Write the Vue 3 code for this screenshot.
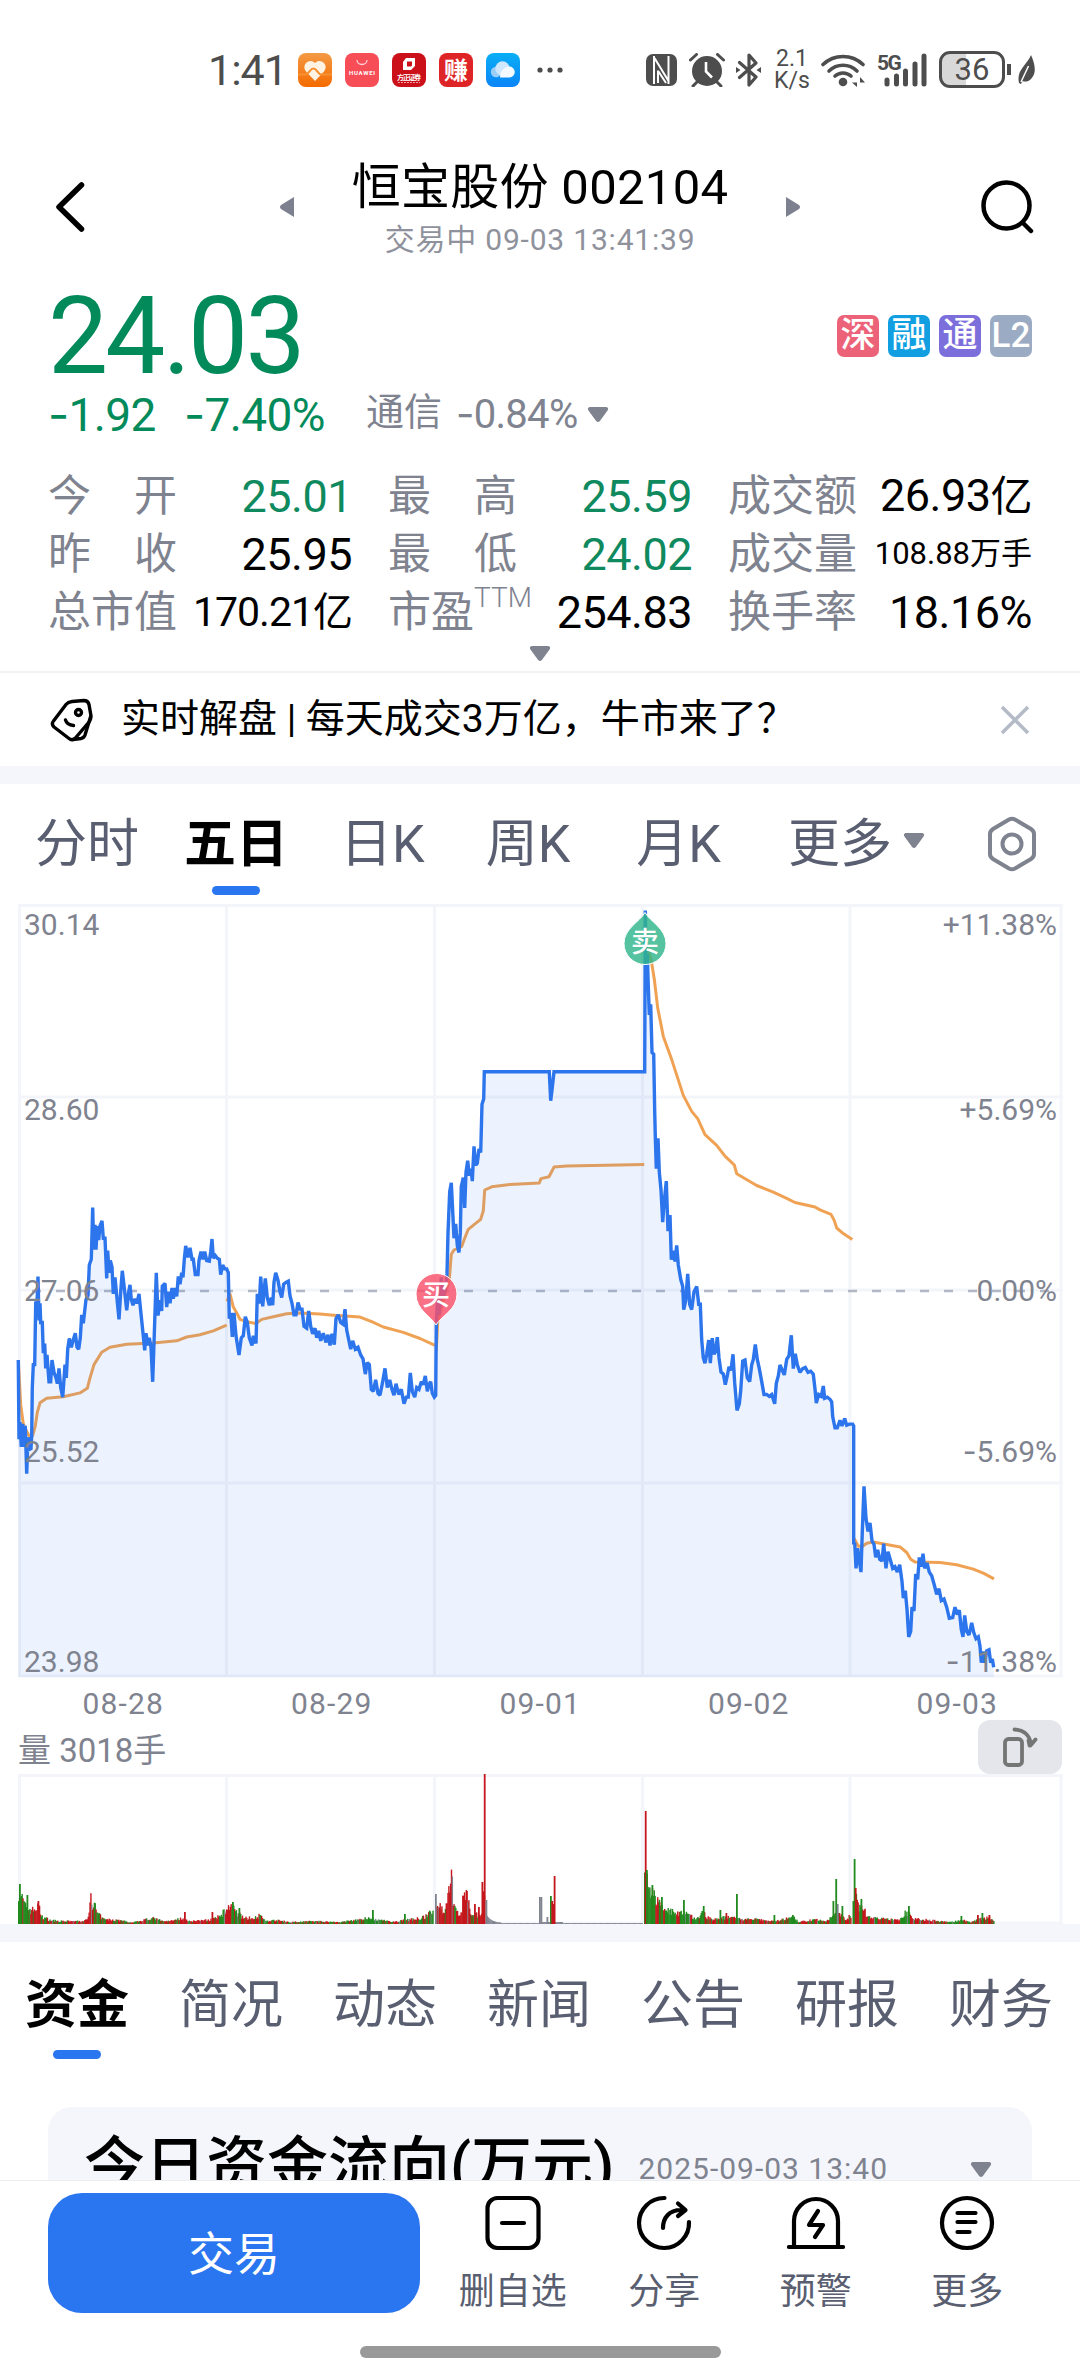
<template>
  <div class="page">
    <div class="status">
      <span class="clock">1:41</span>
      <div class="apps">
        <svg viewBox="0 0 34 34">
          <defs>
            <linearGradient id="gHealth" x1="0" y1="0" x2="0" y2="1">
              <stop offset="0" stop-color="#f39a45" />
              <stop offset="1" stop-color="#f56a00" />
            </linearGradient>
          </defs>
          <rect width="34" height="34" rx="8" fill="url(#gHealth)" />
          <path d="M17 28 8 18.500a5.800 5.800 0 0 1 9-8.500 5.800 5.800 0 0 1 9 8.500z" fill="#fff4e4" />
          <path d="M0 21.500h7c4 0 5-6 8.500-6s4 6 8 6H34" fill="none" stroke="#f79232" stroke-width="2.200" />
        </svg>
        <svg viewBox="0 0 34 34">
          <rect width="34" height="34" rx="8" fill="#f74d57" />
          <path d="M12 7a5 4.500 0 0 0 10 0" fill="none" stroke="#ffd0d2" stroke-width="1.300" />
          <text x="17" y="22" class="tiny" textLength="26">HUAWEI</text>
        </svg>
        <svg viewBox="0 0 34 34">
          <rect width="34" height="34" rx="8" fill="#cc1019" />
          <path d="M14 5h9v8l-4 4h-8v-8zM15 8.500v5h4l1-1v-4z" fill="#fff" fill-rule="evenodd" />
          <text x="17" y="27" class="tiny cn" textLength="24">方正证券</text>
          <path d="M6 29.500h22" stroke="#eba0a4" stroke-width="1" stroke-dasharray="2 1" />
        </svg>
        <svg viewBox="0 0 34 34">
          <rect width="34" height="34" rx="8" fill="#de2427" />
          <text x="17" y="26" class="earn">赚</text>
        </svg>
        <svg viewBox="0 0 34 34">
          <defs>
            <linearGradient id="gCloud" x1="0" y1="0" x2="0" y2="1">
              <stop offset="0" stop-color="#0aaef5" />
              <stop offset="1" stop-color="#0a84f8" />
            </linearGradient>
          </defs>
          <rect width="34" height="34" rx="8" fill="url(#gCloud)" />
          <circle cx="10" cy="19" r="5.200" fill="#9ccdf9" />
          <circle cx="16.500" cy="15.500" r="7.200" fill="#cfe7fd" />
          <path d="M14 24.500c0-7 5-11 9-11a5.500 5.500 0 0 1 .500 11z" fill="#f2f9ff" />
        </svg>
      </div>
      <svg class="dots" viewBox="0 0 26 6">
        <circle cx="3" cy="3" r="2.600" /><circle cx="13" cy="3" r="2.600" /><circle cx="23" cy="3" r="2.600" />
      </svg>

      <div class="sys">
        <svg class="nfc" viewBox="0 0 31 32">
          <rect width="31" height="32" rx="7" fill="#4d4d4d" />
          <path d="M8 2v28M8.500 4 22.500 27M22.500 2v28M12 16.500V29M12.500 17.500 20 29" fill="none" stroke="#fff" stroke-width="2" />
        </svg>
        <svg class="alarm" viewBox="0 0 36 34">
          <circle cx="18" cy="18" r="15" fill="#4d4d4d" />
          <path d="M1.500 7 7.500 1.500M34.500 7 28.500 1.500M8 29l-4 4M28 29l4 4" stroke="#4d4d4d" stroke-width="3" stroke-linecap="round" />
          <path d="M17 9v9.500l6 6" fill="none" stroke="#fff" stroke-width="2.600" />
        </svg>
        <svg class="bt" viewBox="0 0 25 34">
          <path d="M3.500 9.500 20 24l-7 8V2l7 8L3.500 24.500" fill="none" stroke="#4d4d4d" stroke-width="3.200" stroke-linejoin="round" stroke-linecap="round" />
          <path d="m0 14 4.500 3L0 20zM25 14l-4.500 3 4.500 3z" fill="#4d4d4d" />
        </svg>
        <span class="speed"><span>2.1</span><span>K/s</span></span>
        <svg class="wifi" viewBox="0 0 45 35">
          <g fill="none" stroke="#4d4d4d" stroke-width="3.600" stroke-linecap="round">
            <path d="M2 12.500a29 29 0 0 1 40 0" />
            <path d="M8 19a20 20 0 0 1 28 0" />
            <path d="M14 24a12 12 0 0 1 16 0" />
          </g>
          <circle cx="22" cy="30" r="4.300" fill="#4d4d4d" />
          <path d="M36 25v10l-5-4.500h5M39 35V25l5 5.500h-5" fill="#4d4d4d" />
        </svg>
        <svg class="signal" viewBox="0 0 50 36">
          <text x="0" y="18" class="five">5G</text>
          <g stroke="#4d4d4d" stroke-width="5" stroke-linecap="round">
            <path d="M10 28v4M19.500 24v8M28.500 19v13M38 12v20M47 4v28" />
          </g>
        </svg>
        <div class="battery"><span>36</span></div>
        <svg class="leaf" viewBox="0 0 28 34">
          <path d="M2 11v11" stroke="#4d4d4d" stroke-width="4" />
          <path d="M24 2c4 9 6 18 0 24-3 3-6 3-8.500 2L14 31l-2-1C9 17 20 12 24 2z" fill="#4d4d4d" />
          <path d="M21.500 13 14 29" stroke="#fff" stroke-width="1.500" />
        </svg>
      </div>
    </div>

    <header class="header">
      <svg class="back" viewBox="0 0 30 50"><path d="M26.500 3 4 25l22.500 22" /></svg>
      <svg class="arrow" viewBox="0 0 14 20"><path d="M14 0v20L1 12q-2-2 0-4z" /></svg>
      <div class="title">
        <h1>恒宝股份 002104</h1>
        <p>交易中 09-03 13:41:39</p>
      </div>
      <svg class="arrow" viewBox="0 0 14 20"><path d="M0 0v20l13-8q2-2 0-4z" /></svg>
      <svg class="search" viewBox="0 0 54 54">
        <circle cx="25.500" cy="25.500" r="23" /><path d="m42 43 8 8" />
      </svg>
    </header>

    <section class="quote">
      <div class="price-row">
        <span class="price">24.03</span>
        <div class="badges">
          <span v-for="b in badges" :key="b.text" class="badge" :class="b.kind">{{ b.text }}</span>
        </div>
      </div>
      <div class="change-row">
        <span class="change"><b>-</b>1.92</span>
        <span class="change pct"><b>-</b>7.40%</span>
        <span class="sector">通信</span>
        <span class="sector-pct"><b>-</b>0.84%</span>
        <svg class="tri" viewBox="0 0 22 16"><path d="M2 0h18q3 1 1 4L13 15q-2 2-4 0L1 4q-2-3 1-4z" /></svg>
      </div>
      <div class="stats">
        <div v-for="s in stats" :key="s.label" class="stat">
          <span class="stat-label">{{ s.label }}<sup v-if="s.sup">{{ s.sup }}</sup></span>
          <span class="stat-value" :class="[s.size, { down: s.down }]">{{ s.value }}<i v-if="s.unit">{{ s.unit }}</i></span>
        </div>
      </div>
      <svg class="tri expand" viewBox="0 0 22 16"><path d="M2 0h18q3 1 1 4L13 15q-2 2-4 0L1 4q-2-3 1-4z" /></svg>
    </section>

    <div class="news">
      <svg class="tag" viewBox="0 0 44 46">
        <g fill="none" stroke="#000" stroke-width="3.400" stroke-linejoin="round" stroke-linecap="round">
          <path d="M22 4.500 34 3.500q4 0 5 4L41 19q0 3-1.500 5.500L25 41.500q-3 2.500-6 0L4 30q-3-3-.500-6L16 7.500q2-2.500 6-3z" />
          <path d="M40.500 20 35 38q-1 3-4 3.500l-8 1" />
          <circle cx="28.500" cy="15.500" r="3" />
          <path d="M15.500 23q1.500 5 8 5.500" />
        </g>
      </svg>
      <span class="news-text">实时解盘 | 每天成交3万亿，牛市来了？</span>
      <svg class="close" viewBox="0 0 30 30"><path d="m2 2 26 26M28 2 2 28" /></svg>
    </div>
    <div class="divider"></div>

    <nav class="periods">
      <span v-for="p in periods" :key="p.text" class="period" :class="[p.cls, { active: p.text === '五日' }]">{{ p.text }}</span>
      <svg class="tri more-tri" viewBox="0 0 22 16"><path d="M2 0h18q3 1 1 4L13 15q-2 2-4 0L1 4q-2-3 1-4z" /></svg>
      <svg class="gear" viewBox="0 0 50 56">
        <path d="M22 3.500q3-1.500 6 0L44 13q3 2 3 5v20q0 3-3 5L28 52.500q-3 1.500-6 0L6 43q-3-2-3-5V18q0-3 3-5z" />
        <circle cx="25" cy="28" r="9.500" />
      </svg>
    </nav>

    <svg class="chart" viewBox="0 10 1080 780">
      <g stroke="#f3f5fa" stroke-width="3">
        <path v-for="x in gridX" :key="'x' + x" :d="`M${x} 15.500V787`" />
        <path v-for="y in gridY" :key="'y' + y" :d="`M18 ${y}H1063`" />
      </g>
      <path d="M32 401H1060" stroke="#b2b7c4" stroke-width="2.500" stroke-dasharray="9 15" />
      <polyline v-for="(a, i) in averages" :key="i" :points="a" class="avg" />
      <path :d="area" fill="#2a75f0" fill-opacity="0.09" />
      <polyline :points="line" class="line" />

      <g class="axis">
        <text v-for="l in leftAxis" :key="l.t" x="24" :y="l.y">{{ l.t }}</text>
        <text v-for="l in rightAxis" :key="l.t" x="1057" :y="l.y" text-anchor="end"><tspan v-if="l.neg" class="minus">-</tspan>{{ l.t }}</text>
      </g>

      <g class="pin">
        <path d="M436 435c-5-9-20-15-20-31a20.500 20.500 0 0 1 41 0c0 16-16 22-21 31z" fill="#f9506a" />
        <text x="436" y="415">买</text>
      </g>
      <g class="pin">
        <path d="M645 22.500c5 9 21 16 21 31a21 21 0 0 1-42 0c0-15 16-22 21-31z" fill="#30b48b" />
        <text x="645" y="62">卖</text>
      </g>
    </svg>
    <div class="dates">
      <span v-for="d in dates" :key="d">{{ d }}</span>
    </div>

    <div class="vol-head">
      <span>量 3018手</span>
      <div class="rotate">
        <svg viewBox="0 0 36 42">
          <rect x="3" y="13" width="17" height="26" rx="3.500" />
          <path d="M12.500 3.500C21 3.500 28 9 29 18.500M27.500 19.500l-1-5M28.500 19.500l5-6" />
        </svg>
      </div>
    </div>
    <svg class="volume" viewBox="0 0 1080 150">
      <g stroke="#f3f5fa" stroke-width="3">
        <path v-for="x in gridX" :key="x" :d="`M${x} 0V150`" />
        <path d="M18 1.500H1063M18 149H1063" />
      </g>
      <rect v-for="(b, i) in bars" :key="i" :x="b.x" :y="150 - b.h" :width="b.w" :height="b.h" :fill="b.c" />
    </svg>
    <div class="divider"></div>

    <nav class="tabs">
      <span v-for="(t, i) in tabs" :key="t" class="tab" :class="{ active: i === 0 }">{{ t }}</span>
    </nav>

    <section class="card">
      <h2>今日资金流向(万元)</h2>
      <span class="card-time">2025-09-03 13:40</span>
      <svg class="tri" viewBox="0 0 22 16"><path d="M2 0h18q3 1 1 4L13 15q-2 2-4 0L1 4q-2-3 1-4z" /></svg>
    </section>

    <footer class="dock">
      <div class="dock-row">
        <button class="trade">交易</button>
        <div class="action">
          <svg viewBox="0 0 58 58"><rect x="3.500" y="4" width="51" height="50" rx="10" /><path d="M18 29h22" /></svg>
          <span>删自选</span>
        </div>
        <div class="action">
          <svg viewBox="0 0 58 58">
            <path d="M29.500 4A25 25 0 1 0 54 28" />
            <path d="M28 34c0-10 6-18 18-18h3M43 9.500l7.500 6.500-7.500 6" />
          </svg>
          <span>分享</span>
        </div>
        <div class="action">
          <svg viewBox="0 0 58 58">
            <path d="M7 53V27a22 22 0 0 1 44 0v26M2 53h54" />
            <path d="m31 17-9 14h14l-8 12" />
          </svg>
          <span>预警</span>
        </div>
        <div class="action">
          <svg viewBox="0 0 58 58"><circle cx="29" cy="29" r="25" /><path d="M19.500 19h18M19.500 28h18M19.500 38h12" /></svg>
          <span>更多</span>
        </div>
      </div>
      <div class="home"></div>
    </footer>
  </div>
</template>

<script setup>
const badges = [
  { text: '深', kind: 'red' },
  { text: '融', kind: 'blue' },
  { text: '通', kind: 'purple' },
  { text: 'L2', kind: 'gray' },
]

const stats = [
  { label: '今　开', value: '25.01', down: true },
  { label: '最　高', value: '25.59', down: true },
  { label: '成交额', value: '26.93', unit: '亿' },
  { label: '昨　收', value: '25.95' },
  { label: '最　低', value: '24.02', down: true },
  { label: '成交量', value: '108.88', unit: '万手', size: 'small' },
  { label: '总市值', value: '170.21', unit: '亿', size: 'medium' },
  { label: '市盈', sup: 'TTM', value: '254.83' },
  { label: '换手率', value: '18.16%' },
]

const periods = [
  { text: '分时', cls: 'p1' },
  { text: '五日', cls: 'p2' },
  { text: '日K', cls: 'p3' },
  { text: '周K', cls: 'p4' },
  { text: '月K', cls: 'p5' },
  { text: '更多', cls: 'p6' },
]
const dates = ['08-28', '08-29', '09-01', '09-02', '09-03']
const tabs = ['资金', '简况', '动态', '新闻', '公告', '研报', '财务']

const gridX = [19.5, 226.5, 434.5, 642.5, 850, 1061]
const gridY = [15.5, 207, 400, 593, 786]

const leftAxis = [
  { t: '30.14', y: 45 },
  { t: '28.60', y: 230 },
  { t: '27.06', y: 411 },
  { t: '25.52', y: 572 },
  { t: '23.98', y: 782 },
]
const rightAxis = [
  { t: '+11.38%', y: 45 },
  { t: '+5.69%', y: 230 },
  { t: '0.00%', y: 411 },
  { t: '5.69%', y: 572, neg: true },
  { t: '11.38%', y: 782, neg: true },
]

// each block keeps its own origin and vertical unit
const BLOCKS = {
  a: { x: 0, y: 0, k: 2.613 },
  b: { x: 400, y: 0, k: 2.8 },
  c: { x: 640, y: 240, k: 2.703 },
}
const place = (block, str) => {
  const { x, y, k } = BLOCKS[block]
  return str.trim().split(/\s+/).map((p) => {
    const [px, py] = p.split(',').map(Number)
    return `${(x + px / 3).toFixed(1)},${(y + py / k).toFixed(1)}`
  })
}

const line = [
  ...place('a', `55,1228 57,1435 60,1390 64,1455 68,1395 72,1455 76,1400 80,1525 84,1430 88,1462 93,1460 95,1425 97,1300
    100,1240 104,1240 107,1080 111,1080 114,1010 117,1125 120,1080 122,1130 127,1130 130,1210 134,1185 137,1250 141,1215
    147,1285 152,1285 156,1228 162,1260 168,1275 172,1290 177,1250 182,1300 188,1325 191,1290 195,1240 199,1275 203,1200
    208,1172 214,1195 220,1175 226,1158 231,1195 236,1200 241,1170 245,1110 250,1132 254,1100 258,1070 264,1060 268,980
    274,965 278,830 281,940 285,875 288,940 292,878 296,915 300,878 306,865 310,910 315,910 320,1015 323,942 327,1000 331,968
    336,985 340,1055 345,1012 350,1060 357,1122 362,1050 367,995 374,1050 380,1098 386,1050 390,1032 394,1070 399,1085
    405,1068 411,1080 417,1055 422,1100 428,1150 434,1203 438,1158 444,1190 448,1170 453,1195 458,1285 463,1160 469,1000
    474,1112 480,1072 485,1100 487,1035 495,1028 500,1090 505,1050 510,1080 516,1040 520,1068 525,1040 530,1062 535,1010
    540,1030 545,1000 549,1012 553,965 557,930 564,960 570,935 576,965 580,965 586,1005 594,1005 597,968 603,945 609,965
    614,945 620,968 628,970 632,945 636,912 640,962 646,955 652,962 658,965 662,1005 668,980 674,990 680,990
    685,1000 688,1120 692,1105 697,1168 702,1105 708,1165 717,1215 724,1170 730,1165 736,1115 742,1130 748,1170 756,1190
    760,1165 768,1185 772,1055 778,1080 782,1010 788,1088 796,1015 802,1065 808,1085 814,1065 818,1085 822,1025 827,1000
    834,1020 840,1050 845,1065 851,1030 858,1025 865,1022 870,1060 876,1080 882,1110 888,1110 894,1078 900,1095 906,1095
    912,1140 920,1145 926,1100 932,1140 938,1160 945,1145 950,1170 956,1152 962,1178 970,1158 978,1182 984,1162 990,1190
    996,1160 1003,1188 1008,1120 1015,1110 1022,1130 1030,1135 1035,1095 1040,1150 1046,1175 1052,1200 1058,1178 1066,1200
    1074,1195 1082,1215 1089,1225 1096,1265 1102,1235 1108,1240 1114,1305 1120,1310 1127,1280 1134,1315 1140,1320
    1147,1290 1155,1250 1162,1300 1169,1280 1176,1305 1182,1320 1188,1290 1196,1318 1204,1305 1212,1342 1219,1325
    1225,1325 1231,1262 1237,1310 1244,1325 1250,1300 1257,1305 1264,1285 1270,1292 1276,1270 1282,1310 1288,1290
    1292,1285 1297,1315 1303,1325`),
  ...place('b', `107,1415 109,1215 113,1130 118,1190 124,1085 129,1140 136,1120 141,1075 144,960 149,845 154,820 158,900
    162,975 167,935 172,995 177,1015 181,960 184,830 190,805 194,890 198,790 203,758 208,800 213,780 217,815 222,718
    227,770 232,765 237,725 242,735 246,600 251,585 253,509 448,509 452,590 456,560 462,509 734,509 736,57 739,270
    742,180 745,270 748,350 752,320 756,455 761,460 764,620 766,690 769,780 774,695 778,790 783,840 788,930 793,870
    799,815 804,955 810,910 814,1035 820,1010 825,1040 830,995 835,1050 842,1090 848,1110 851,1175 857,1150 863,1075
    869,1160 875,1175 882,1125 890,1110 896,1160 901,1160 905,1260 910,1310 915,1325 920,1300 926,1260 931,1325 937,1255
    942,1300 947,1290 952,1252 957,1310 963,1350 970,1355 976,1385 982,1360 987,1335 993,1345 999,1300 1004,1380`),
  ...place('c', `291,758 298,740 302,705 308,625 315,622 322,670 329,680 335,635 340,620 346,580 352,620 358,645 365,680
    372,715 380,715 388,720 395,715 404,740 409,685 415,665 420,635 427,650 433,662 440,620 447,610 454,555 460,645
    466,605 472,635 480,655 488,645 496,642 504,655 512,652 520,660 525,700 529,738 536,715 544,720 550,692 554,725
    562,722 570,728 575,735 578,775 585,805 592,805 600,785 606,800 614,780 620,798 628,795 638,795 641,800 641,1120
    644,1115 648,1185 653,1130 658,1165 663,1195 667,1085 672,963 678,1050 684,1085 690,1062 696,1110 702,1120 707,1155
    713,1135 719,1160 726,1165 731,1118 738,1185 744,1140 752,1165 758,1185 765,1180 772,1195 779,1175 786,1220
    790,1265 796,1245 801,1295 806,1370 812,1355 816,1290 822,1300 827,1200 833,1215 838,1155 844,1180 849,1145
    854,1185 861,1170 868,1195 875,1205 883,1230 890,1255 897,1240 904,1272 912,1268 920,1290 928,1320 938,1318
    945,1290 952,1310 958,1298 964,1350 969,1370 974,1312 980,1355 987,1365 995,1332 1001,1358 1008,1375 1015,1370
    1020,1395 1024,1440 1029,1410 1034,1440 1040,1408 1047,1405 1052,1440 1057,1430 1061,1452`),
].join(' ')

const area = `M18.3 787L${line.replace(/ /g, 'L')}V787Z`

const averages = [
  place('a', `55,1228 62,1345 70,1395 80,1415 90,1430 98,1425 106,1400 112,1365 120,1340 140,1328 190,1324 240,1314 262,1302
    270,1275 282,1240 305,1208 330,1195 380,1187 460,1184 530,1178 560,1168 600,1162 640,1152 680,1137`),
  place('a', `681,1075 690,1055 700,1090 712,1108 720,1122 740,1128 768,1133 785,1122 820,1115 860,1107 900,1105 960,1108
    1000,1111 1080,1116 1115,1128 1150,1142 1210,1156 1260,1172 1305,1190`),
  place('b', `109,1290 113,1210 130,1150 148,1090 154,1020 162,1008 185,998 192,980 205,950 225,935 242,922 250,898 254,840
    275,831 330,825 418,820 423,808 447,803 462,776 500,773 733,769`),
  [
    ...place('b', `740,150 755,205 763,250 773,330 790,410 815,475 850,575 875,620 893,640 915,685 950,715 975,745 1003,770`),
    ...place('c', `290,118 350,150 400,168 440,185 465,196 525,208 540,216 573,228 583,245 590,265 610,280 637,296`),
  ],
  place('c', `643,1105 655,1125 668,1125 680,1117 700,1114 780,1127 800,1142 812,1160 825,1168 900,1169 950,1175 1000,1187
    1030,1198 1062,1213`),
].map((p) => p.join(' '))

const UP = '#c4161c'
const DOWN = '#218a1e'
const FLAT = '#80848f'

// volume envelope per session: [x, height, share of rising bars]
const envelopes = [
  [[18, 38, 0.1], [22, 26, 0.2], [25, 18, 0.6], [32, 15, 0.9], [38, 19, 1], [41, 8, 0.4], [50, 4, 0.3], [60, 3, 0.6], [82, 3, 0.9], [87, 7, 1], [90, 26, 1], [93, 22, 0.8], [97, 11, 0.4], [103, 5, 0.5], [120, 4, 0.4], [130, 1.5, 0.3], [152, 6, 0.5], [165, 3, 0.6], [182, 6, 0.8], [188, 3, 0.7], [205, 4, 0.9], [216, 6, 0.5], [223, 13, 0.3], [227, 17, 0.9]],
  [[227, 19, 0.9], [232, 17, 0.5], [240, 9, 0.6], [247, 6, 0.7], [260, 9, 0.7], [265, 3, 0.3], [275, 4, 0.7], [290, 2, 0.5], [310, 3, 0.6], [340, 2, 0.5], [365, 6, 0.3], [376, 5, 0.2], [392, 2, 0.6], [410, 5, 0.8], [420, 6, 0.6], [428, 10, 0.5], [433, 18, 0.3]],
  [[436, 27, 0.8], [441, 18, 0.9], [445, 14, 0.9], [448, 44, 1], [451, 58, 1], [453, 18, 0.4], [458, 10, 0.9], [461, 14, 1], [463, 32, 1], [467, 31, 1], [470, 8, 0.3], [477, 10, 0.7], [481, 10, 0.9], [484, 40, 1]],
  [[644, 48, 0.5], [648, 40, 0.1], [652, 33, 0.4], [657, 25, 0.9], [661, 18, 0.4], [667, 14, 0.6], [675, 13, 0.3], [683, 13, 0], [688, 9, 0.6], [696, 6, 0.3], [703, 13, 0.1], [708, 6, 0.8], [718, 5, 0.4], [726, 8, 0.7], [740, 5, 0.7], [755, 5, 0.5], [773, 3, 0.6], [793, 7, 0.3], [798, 2, 0.5], [815, 5, 0.5], [825, 3, 0.3], [833, 10, 0.2], [838, 12, 0.4], [844, 5, 0.6], [851, 9, 0.7]],
  [[854, 34, 0.4], [858, 18, 0.4], [864, 14, 0.9], [868, 7, 0.6], [885, 5, 0.8], [898, 4, 0.6], [903, 11, 0.1], [909, 12, 0.1], [912, 6, 0.9], [930, 4, 0.7], [950, 2, 0.4], [962, 4, 0.3], [970, 2, 0.4], [982, 6, 0.5], [988, 7, 0.7], [994, 3, 0.3]],
]
const spikes = [
  [19, 40, DOWN], [26.5, 29, DOWN], [37.5, 23, UP], [184, 12, UP], [211.5, 12, UP], [232, 22, DOWN], [238.5, 16, DOWN],
  [372, 14, DOWN], [404, 10, DOWN], [435, 30, FLAT], [474, 20, UP], [478, 17, UP], [481.5, 42, UP], [483.8, 150, UP],
  [485.5, 24, FLAT], [539, 27, FLAT], [540.5, 27, FLAT], [546.5, 7, FLAT], [550, 28, DOWN], [551.3, 23, UP], [552.5, 20, UP],
  [553.7, 48, UP], [644.8, 113, UP], [646, 54, DOWN], [651.5, 39, DOWN], [661, 27, DOWN], [683, 24, DOWN], [702.8, 18, DOWN],
  [719.5, 14, DOWN], [725.5, 11, UP], [736, 30, DOWN], [773.5, 9, DOWN], [792, 9, DOWN], [832.5, 23, DOWN], [835.3, 45, DOWN],
  [836.8, 20, FLAT], [841.5, 18, DOWN], [852.5, 23, DOWN], [853.7, 65, DOWN], [854.8, 36, UP], [860.5, 25, DOWN],
  [908, 18, DOWN], [960.5, 8, DOWN], [977, 9, UP], [981.5, 11, DOWN], [988.5, 9, UP],
]

let seed = 7
const rand = () => {
  seed = (seed * 16807) % 2147483647
  return seed / 2147483647
}

const bars = []
for (const env of envelopes) {
  let k = 0
  for (let x = env[0][0]; x < env[env.length - 1][0]; x += 0.87) {
    while (x > env[k + 1][0]) k++
    const [x0, h0, u0] = env[k]
    const [x1, h1, u1] = env[k + 1]
    const t = (x - x0) / (x1 - x0)
    const h = (h0 + (h1 - h0) * t) * (0.6 + rand() * 0.6)
    const up = u0 + (u1 - u0) * t
    const r = rand()
    bars.push({ x, h: Math.max(h, 1), w: 1.4, c: r < 0.04 ? FLAT : rand() < up ? UP : DOWN })
  }
}
// limit-up stretch trades almost nothing
for (let x = 486; x < 642; x += 0.87) {
  const h = x < 500 ? 8 * Math.exp(-(x - 486) / 5) + 1 : x > 541 && x < 562 ? 2 : 0.9
  bars.push({ x, h, w: 1.2, c: FLAT })
}
for (const [x, h, c] of spikes) bars.push({ x, h, w: 1.8, c })
</script>

<style>
body {
  margin: 0;
  background: #fff;
}
</style>

<style scoped>
.page {
  position: relative;
  width: 1080px;
  height: 2376px;
  overflow: hidden;
  background: #fff;
  color: #000;
  font-family: Roboto, 'Noto Sans CJK SC', sans-serif;
}
svg {
  display: block;
  flex: none;
}
.status {
  height: 139px;
  display: flex;
  align-items: center;
  padding-left: 208px;
  color: #4d4d4d;
}
.clock {
  width: 90px;
  font-size: 43px;
  letter-spacing: -1px;
}
.apps {
  display: flex;
  gap: 13px;
}
.apps svg {
  width: 34px;
  height: 34px;
}
.tiny {
  font-size: 6px;
  font-weight: 700;
  fill: #fff;
  text-anchor: middle;
}
.tiny.cn {
  font-size: 7px;
}
.earn {
  font-size: 24px;
  font-weight: 700;
  fill: #fff;
  text-anchor: middle;
}
.dots {
  width: 26px;
  height: 6px;
  margin-left: 17px;
  fill: #4d4d4d;
}
.sys {
  display: flex;
  align-items: center;
  margin-left: 83px;
}
.nfc {
  width: 31px;
  height: 32px;
}
.alarm {
  width: 36px;
  height: 34px;
  margin-left: 12px;
}
.bt {
  width: 25px;
  height: 34px;
  margin-left: 11px;
}
.speed {
  display: flex;
  flex-direction: column;
  align-items: center;
  width: 34px;
  margin-left: 14px;
  font-size: 23px;
  line-height: 22px;
}
.wifi {
  width: 45px;
  height: 35px;
  margin-left: 12px;
}
.signal {
  width: 50px;
  height: 36px;
  margin-left: 11px;
}
.five {
  font-size: 21px;
  font-weight: 700;
  fill: #4d4d4d;
  letter-spacing: -1.5px;
}
.battery {
  box-sizing: border-box;
  width: 66px;
  height: 37px;
  margin-left: 12px;
  border: 3px solid #4d4d4d;
  border-radius: 11px;
  background: linear-gradient(90deg, #d8d8d8 24px, #fff 24px);
  text-align: center;
  font-size: 31px;
  line-height: 32px;
}
.leaf {
  width: 28px;
  height: 34px;
  margin-left: 2px;
}

.header {
  height: 136px;
  display: flex;
  align-items: center;
  padding: 0 45px 0 55px;
}
.back {
  width: 30px;
  height: 50px;
  fill: none;
  stroke: #000;
  stroke-width: 5.5;
  stroke-linecap: round;
  stroke-linejoin: round;
}
.arrow {
  width: 14px;
  height: 20px;
  fill: #7d818f;
}
.back + .arrow {
  margin-left: 195px;
}
.title {
  flex: 1;
  text-align: center;
}
.title h1 {
  margin: 3px 0 0;
  font-size: 49px;
  font-weight: 400;
  line-height: 60px;
  letter-spacing: 0.3px;
}
.title p {
  margin: 2px 0 0;
  font-size: 30px;
  line-height: 40px;
  letter-spacing: 0.8px;
  color: #8f929c;
}
.search {
  width: 54px;
  height: 54px;
  margin-left: 181px;
  fill: none;
  stroke: #000;
  stroke-width: 4.5;
  stroke-linecap: round;
}

.quote {
  height: 396px;
  padding: 0 48px;
}
.price-row {
  display: flex;
  justify-content: space-between;
  align-items: center;
  height: 118px;
}
.price {
  margin-top: 6px;
  font-size: 107px;
  line-height: 118px;
  letter-spacing: -2.8px;
  color: #028a5b;
}
.badges {
  display: flex;
  gap: 9px;
  margin-top: 4px;
}
.badge {
  width: 42px;
  height: 42px;
  border-radius: 7px;
  color: #fff;
  font-size: 35px;
  font-weight: 500;
  line-height: 41px;
  text-align: center;
}
.badge.red { background: #ec6379; }
.badge.blue { background: #129fe2; }
.badge.purple { background: #7c6edb; }
.badge.gray { background: #9babc3; }
.change-row {
  display: flex;
  align-items: center;
  height: 42px;
  line-height: 42px;
}
.change-row b,
.minus {
  font-family: Inter, sans-serif;
  font-weight: 400;
}
.change {
  width: 136px;
  font-size: 46px;
  letter-spacing: -0.6px;
  color: #028a5b;
}
.change.pct {
  width: 182px;
}
.sector {
  width: 90px;
  margin-top: -4px;
  font-size: 38px;
  color: #7f838f;
}
.sector-pct {
  font-size: 40px;
  color: #7f838f;
  letter-spacing: -0.7px;
}
.tri {
  width: 22px;
  height: 15px;
  fill: #7f838f;
}
.change-row .tri {
  margin-left: 9px;
}
.stats {
  display: grid;
  grid-template-columns: repeat(3, 304px);
  grid-auto-rows: 58px;
  column-gap: 36px;
  margin-top: 32px;
}
.stat {
  display: flex;
  justify-content: space-between;
  align-items: center;
  white-space: nowrap;
}
.stat-label {
  font-size: 43px;
  line-height: 58px;
  color: #7f838f;
}
.stat-label sup {
  font-size: 28px;
  font-weight: 300;
  line-height: 0;
  vertical-align: 20px;
}
.stat-value {
  padding-top: 1px;
  font-size: 45px;
  line-height: 58px;
  letter-spacing: -0.5px;
}
.stat-value i {
  font-style: normal;
  font-size: 42px;
}
.stat-value.medium {
  font-size: 41px;
  letter-spacing: -1px;
}
.stat-value.medium i {
  font-size: 40px;
}
.stat-value.small {
  padding-top: 0;
  font-size: 31px;
  letter-spacing: 0;
}
.stat-value.small i {
  font-size: 31px;
}
.down {
  color: #0f8a5f;
}
.expand {
  margin: 5px auto 0;
}

.news {
  box-sizing: border-box;
  height: 95px;
  display: flex;
  align-items: center;
  padding: 0 50px;
  border-top: 2px solid #f1f2f5;
}
.tag {
  width: 44px;
  height: 46px;
}
.news-text {
  flex: 1;
  margin: -9px 0 0 27px;
  font-size: 39px;
}
.close {
  width: 30px;
  height: 30px;
  fill: none;
  stroke: #b4bbc7;
  stroke-width: 3.5;
}
.divider {
  height: 18px;
  background: #f4f6fb;
}

.periods {
  display: flex;
  align-items: flex-start;
  height: 116px;
  padding-left: 35px;
}
.period {
  display: flex;
  flex-direction: column;
  align-items: center;
  font-size: 52px;
  line-height: 72px;
  padding-top: 25px;
  color: #595e70;
}
.p2 { margin-left: 45px; }
.p3 { margin-left: 52px; }
.p4 { margin-left: 61px; }
.p5 { margin-left: 66px; }
.p6 { margin-left: 67px; }
.active {
  color: #000;
  font-weight: 700;
}
.active::after {
  content: '';
  width: 48px;
  height: 9px;
  border-radius: 5px;
  background: #2a75f0;
}
.period.active::after {
  margin-top: 5px;
}
.more-tri {
  margin: 49px 0 0 11px;
}
.gear {
  width: 50px;
  height: 56px;
  margin: 32px 0 0 62px;
  fill: none;
  stroke: #7f838f;
  stroke-width: 4;
}

.chart {
  width: 1080px;
  height: 780px;
}
.avg {
  fill: none;
  stroke: #f0a254;
  stroke-width: 3;
  stroke-linejoin: round;
}
.line {
  fill: none;
  stroke: #2d75ec;
  stroke-width: 3.4;
  stroke-linejoin: miter;
  stroke-miterlimit: 2;
}
.axis {
  font-size: 30px;
  fill: #7f838f;
}
.pin path {
  fill-opacity: 0.82;
  stroke: #fff;
  stroke-width: 1;
}
.pin text {
  font-size: 28px;
  font-weight: 500;
  fill: #fff;
  text-anchor: middle;
}
.dates {
  display: grid;
  grid-template-columns: repeat(5, 208.5px);
  padding-left: 19px;
  height: 42px;
  font-size: 30px;
  line-height: 47px;
  letter-spacing: 1.2px;
  text-align: center;
  color: #7f838f;
}
.vol-head {
  display: flex;
  justify-content: space-between;
  align-items: flex-end;
  height: 52px;
  padding: 0 18px;
  font-size: 33px;
  line-height: 46px;
  color: #7f838f;
}
.rotate {
  width: 84px;
  height: 54px;
  margin-top: -2px;
  display: flex;
  align-items: center;
  justify-content: center;
  border-radius: 12px;
  background: #e4e6eb;
}
.rotate svg {
  width: 36px;
  height: 42px;
  fill: none;
  stroke: #757575;
  stroke-width: 3.8;
  stroke-linecap: round;
  stroke-linejoin: round;
}
.volume {
  width: 1080px;
  height: 150px;
}

.tabs {
  display: grid;
  grid-template-columns: repeat(7, 154px);
  height: 165px;
}
.tab {
  display: flex;
  flex-direction: column;
  align-items: center;
  padding-top: 28px;
  font-size: 52px;
  line-height: 72px;
  color: #595e70;
}
.tab.active {
  color: #000;
}
.tab.active::after {
  margin-top: 8px;
}

.card {
  display: flex;
  align-items: flex-start;
  height: 200px;
  margin: 0 48px;
  padding: 0 40px 0 36px;
  border-radius: 24px;
  background: #f4f6fb;
}
.card h2 {
  margin: 0;
  padding-top: 19px;
  font-size: 61px;
  font-weight: 500;
  line-height: 80px;
}
.card-time {
  flex: 1;
  padding-top: 42px;
  margin-left: 24px;
  font-size: 30px;
  line-height: 40px;
  letter-spacing: 1px;
  color: #7f838f;
}
.card .tri {
  margin-top: 55px;
}

.dock {
  position: absolute;
  left: 0;
  right: 0;
  bottom: 0;
  box-sizing: border-box;
  height: 196px;
  border-top: 1px solid #eceef2;
  background: #fff;
}
.dock-row {
  display: flex;
  padding: 12px 0 0 48px;
}
.trade {
  width: 372px;
  height: 120px;
  padding: 0 0 6px;
  border: 0;
  border-radius: 34px;
  background: #2a75f0;
  color: #fff;
  font-family: inherit;
  font-size: 46px;
}
.action {
  display: flex;
  flex-direction: column;
  align-items: center;
  width: 151.5px;
  font-size: 36px;
  line-height: 50px;
  color: #595e70;
}
.trade + .action {
  margin-left: 17px;
}
.action svg {
  width: 58px;
  height: 58px;
  margin-top: 1px;
  margin-bottom: 15px;
  fill: none;
  stroke: #000;
  stroke-width: 4.2;
  stroke-linecap: round;
  stroke-linejoin: round;
}
.home {
  width: 361px;
  height: 12px;
  margin: 29px auto 0;
  border-radius: 6px;
  background: #999;
}
</style>
